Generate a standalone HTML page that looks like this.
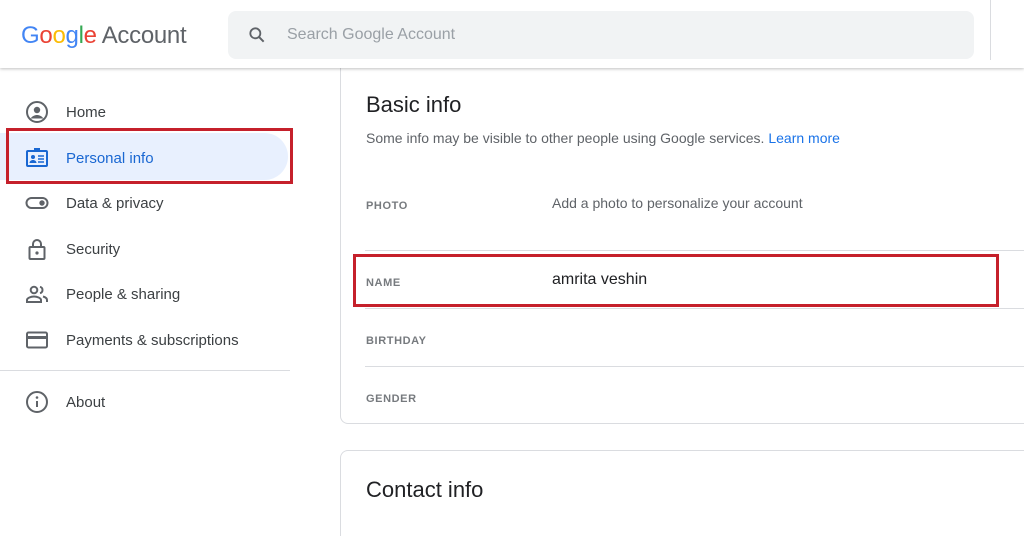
<!DOCTYPE html>
<html><head><style>
*{margin:0;padding:0;box-sizing:border-box}
html,body{width:1024px;height:536px;overflow:hidden}
body{background:#fff;font-family:"Liberation Sans",Arial,sans-serif;position:relative;color:#202124}
.hdr{position:absolute;left:0;top:0;width:1024px;height:68px;background:#fff;box-shadow:0 1px 3px rgba(0,0,0,.25);z-index:2}
.logo{position:absolute;left:21px;top:22px;font-size:24px;letter-spacing:-0.3px}
.search{position:absolute;left:228px;top:11px;width:746px;height:48px;background:#f1f3f4;border-radius:8px}
.search span{position:absolute;left:59px;top:15px;font-size:16px;color:#9aa0a6}
.nav{position:absolute;left:0;height:22px;font-size:15px;color:#3c4043}
.nav .t{position:absolute;left:66px;top:3px;line-height:18px;white-space:nowrap}
.ic{position:absolute;left:25px;top:-1px}
.a{position:absolute}
.lab{position:absolute;left:366px;font-size:11px;letter-spacing:.6px;color:#5f6368;font-weight:bold;opacity:.85}
.ln{position:absolute;left:365px;right:0;height:1px;background:#dadce0}
</style></head><body>
<div class="hdr">
<div class="logo"><span style="color:#4285f4">G</span><span style="color:#ea4335">o</span><span style="color:#fbbc05">o</span><span style="color:#4285f4">g</span><span style="color:#34a853">l</span><span style="color:#ea4335">e</span> <span style="color:#5f6368">Account</span></div>
<div class="search"><svg style="position:absolute;left:19px;top:14px" width="20" height="20" viewBox="0 0 24 24"><circle cx="10" cy="10" r="6" fill="none" stroke="#5f6368" stroke-width="2.2"/><path d="M14.5 14.5L20 20" stroke="#5f6368" stroke-width="2.4"/></svg><span>Search Google Account</span></div>
<div class="a" style="left:990px;top:0;width:1px;height:60px;background:#dadce0"></div>
</div>
<div class="a" style="left:0;top:133px;width:288px;height:47px;background:#e8f0fe;border-radius:0 24px 24px 0"></div>
<div class="a" style="left:6px;top:128px;width:287px;height:56px;border:3px solid #c5202b"></div>
<div class="nav" style="top:101px"><svg class="ic" width="24" height="24" viewBox="0 0 24 24"><circle cx="12" cy="12" r="10" fill="none" stroke="#5f6368" stroke-width="2"/><circle cx="12" cy="10" r="3.2" fill="#5f6368"/><path d="M5.5 18.5c2-2.5 4-3.5 6.5-3.5s4.5 1 6.5 3.5" fill="#5f6368"/></svg><span class="t">Home</span></div>
<div class="nav" style="top:147px;color:#1967d2"><svg class="ic" width="24" height="24" viewBox="0 0 24 24"><rect x="2" y="5" width="20" height="15" rx="1" fill="none" stroke="#1967d2" stroke-width="2"/><rect x="9" y="2" width="6" height="4" fill="#1967d2"/><circle cx="8" cy="11" r="2" fill="#1967d2"/><path d="M4.5 17c0-2 2-3 3.5-3s3.5 1 3.5 3z" fill="#1967d2"/><path d="M13 10h6M13 13h6M13 16h6" stroke="#1967d2" stroke-width="1.6"/></svg><span class="t">Personal info</span></div>
<div class="nav" style="top:192px"><svg class="ic" width="24" height="24" viewBox="0 0 24 24"><rect x="1.5" y="7" width="21" height="10" rx="5" fill="none" stroke="#5f6368" stroke-width="2"/><circle cx="17" cy="12" r="2.7" fill="#5f6368"/></svg><span class="t">Data &amp; privacy</span></div>
<div class="nav" style="top:238px"><svg class="ic" width="24" height="24" viewBox="0 0 24 24"><rect x="4.5" y="10" width="15" height="12" rx="1" fill="none" stroke="#5f6368" stroke-width="2"/><path d="M8 10V7a4 4 0 0 1 8 0v3" fill="none" stroke="#5f6368" stroke-width="2"/><circle cx="12" cy="16" r="1.6" fill="#5f6368"/></svg><span class="t">Security</span></div>
<div class="nav" style="top:283px"><svg class="ic" width="24" height="24" viewBox="0 0 24 24"><circle cx="9" cy="8" r="3.3" fill="none" stroke="#5f6368" stroke-width="2"/><path d="M2 20v-2c0-2 4-3.5 7-3.5s7 1.5 7 3.5v2z" fill="none" stroke="#5f6368" stroke-width="2"/><path d="M15 4.8a3.3 3.3 0 0 1 0 6.4M18 14.5c2 .6 4 1.7 4 3.5v2" fill="none" stroke="#5f6368" stroke-width="2"/></svg><span class="t">People &amp; sharing</span></div>
<div class="nav" style="top:329px"><svg class="ic" width="24" height="24" viewBox="0 0 24 24"><rect x="2" y="4.5" width="20" height="15" rx="1.5" fill="none" stroke="#5f6368" stroke-width="2"/><rect x="2" y="8" width="20" height="3" fill="#5f6368"/></svg><span class="t">Payments &amp; subscriptions</span></div>
<div class="a" style="left:0;top:370px;width:290px;height:1px;background:#dadce0"></div>
<div class="nav" style="top:391px"><svg class="ic" width="24" height="24" viewBox="0 0 24 24"><circle cx="12" cy="12" r="10" fill="none" stroke="#5f6368" stroke-width="2"/><path d="M12 11v6" stroke="#5f6368" stroke-width="2"/><circle cx="12" cy="7.5" r="1.3" fill="#5f6368"/></svg><span class="t">About</span></div>
<div class="a" style="left:340px;top:60px;width:684px;height:364px;border:1px solid #dadce0;border-right:none;border-radius:8px 0 0 8px"></div>
<div class="a" style="left:340px;top:450px;width:684px;height:86px;border:1px solid #dadce0;border-right:none;border-bottom:none;border-radius:8px 0 0 0"></div>
<div class="a" style="left:366px;top:92px;font-size:22px;color:#202124">Basic info</div>
<div class="a" style="left:366px;top:130px;font-size:14px;color:#5f6368">Some info may be visible to other people using Google services. <span style="color:#1a73e8">Learn more</span></div>
<div class="lab" style="top:200px">PHOTO</div>
<div class="a" style="left:552px;top:195px;font-size:14px;color:#5f6368">Add a photo to personalize your account</div>
<div class="ln" style="top:250px"></div>
<div class="lab" style="top:277px">NAME</div>
<div class="a" style="left:552px;top:271px;font-size:16px;color:#202124">amrita veshin</div>
<div class="a" style="left:353px;top:254px;width:646px;height:53px;border:3px solid #c5202b"></div>
<div class="ln" style="top:308px"></div>
<div class="lab" style="top:335px">BIRTHDAY</div>
<div class="ln" style="top:366px"></div>
<div class="lab" style="top:393px">GENDER</div>
<div class="a" style="left:366px;top:477px;font-size:22px;color:#202124">Contact info</div>
</body></html>
